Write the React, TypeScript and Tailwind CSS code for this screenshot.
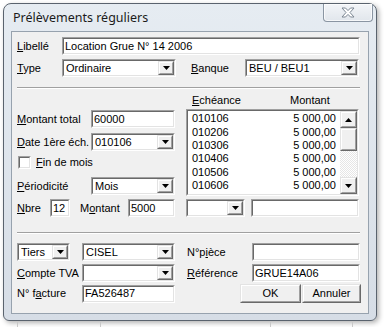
import React from "react";

type P = { className?: string; children?: React.ReactNode; inner?: string };

function Raised({ className = "", children }: P) {
  return (
    <div className={`border border-t-[#e3e3e3] border-l-[#e3e3e3] border-r-[#696969] border-b-[#696969] bg-[#f0f0f0] ${className}`}>
      <div className="w-full h-full border border-t-white border-l-white border-r-[#a0a0a0] border-b-[#a0a0a0] flex items-center justify-center">
        {children}
      </div>
    </div>
  );
}

function Sunken({ className = "", children, inner = "" }: P) {
  return (
    <div className={`border border-t-[#a0a0a0] border-l-[#a0a0a0] border-r-white border-b-white shrink-0 ${className}`}>
      <div className={`w-full h-full bg-white border border-t-[#696969] border-l-[#696969] border-r-[#e3e3e3] border-b-[#e3e3e3] ${inner}`}>
        {children}
      </div>
    </div>
  );
}

const Tri = ({ up }: { up?: boolean }) => (
  <svg width="7" height="4" viewBox="0 0 7 4">
    <polygon points={up ? "0,4 7,4 3.5,0" : "0,0 7,0 3.5,4"} fill="#000" />
  </svg>
);

function Input({ className = "", text = "" }: { className?: string; text?: string }) {
  return (
    <Sunken className={`h-[18px] ${className}`} inner="flex items-center pl-[1px] text-[11px] leading-none">
      {text}
    </Sunken>
  );
}

function Combo({ className = "", text = "" }: { className?: string; text?: string }) {
  return (
    <Sunken className={`h-[18px] ${className}`} inner="flex items-stretch text-[11px] leading-none">
      <div className="flex-1 flex items-center pl-[2px]">{text}</div>
      <Raised className="w-[16px]">
        <Tri />
      </Raised>
    </Sunken>
  );
}

function Sep() {
  return <div className="h-[2px] w-[343px] border-t border-t-[#a0a0a0] border-b border-b-white" />;
}

const rows = ["010106", "010206", "010306", "010406", "010506", "010606"];

export default function App() {
  return (
    <div className="w-[385px] h-[327px] bg-white overflow-hidden font-['Liberation_Sans',Arial,sans-serif] text-black">
      <div className="ml-[3px] mt-[3px] w-[374px] h-[318px] rounded-t-[8px] rounded-b-[6px] border border-[#5a636e] bg-gradient-to-b from-[#e6ecf2] to-[#d6dde6] shadow-[2px_2px_5px_rgba(0,0,0,0.3)] flex flex-col">
        {/* title bar */}
        <div className="h-[27px] flex items-start justify-between">
          <div className="pl-[9px] pt-[6px] text-[12.5px] leading-[16px] text-[#1b1b1b] font-['Noto_Sans','Open_Sans',sans-serif]">
            Prélèvements réguliers
          </div>
          <div className="mr-[3px] w-[50px] h-[18px] rounded-b-[4px] border border-t-0 border-[#8a95a2] bg-gradient-to-b from-[#f3f5f8] to-[#e1e6ec] flex items-center justify-center shadow-[inset_0_0_0_1px_rgba(255,255,255,0.7)]">
            <svg width="14" height="11" viewBox="0 0 14 11">
              <polygon
                points="1,1 4.5,1 7,3.6 9.5,1 13,1 9,5.5 13,10 9.5,10 7,7.4 4.5,10 1,10 5,5.5"
                fill="#ffffff"
                stroke="#7c8793"
                strokeWidth="1"
                strokeLinejoin="round"
              />
            </svg>
          </div>
        </div>
        {/* client */}
        <div className="mx-[7px] h-[283px] border border-[#97a2ae] bg-[#f0f0f0]">
          <div className="pt-[5px] pl-[5px] flex flex-col text-[11px] leading-none">
            {/* Libellé */}
            <div className="flex items-center h-[18px]">
              <div className="w-[45px]">
                <span className="underline">L</span>ibellé
              </div>
              <Input className="w-[298px]" text="Location Grue N° 14 2006" />
            </div>
            {/* Type / Banque */}
            <div className="flex items-center h-[18px] mt-[4px]">
              <div className="w-[45px]">
                <span className="underline">T</span>ype
              </div>
              <Combo className="w-[114px]" text="Ordinaire" />
              <div className="ml-[15px] w-[54px]">
                <span className="underline">B</span>anque
              </div>
              <Combo className="w-[114px]" text="BEU / BEU1" />
            </div>
            <div className="mt-[10px]">
              <Sep />
            </div>
            {/* middle */}
            <div className="flex">
              <div className="w-[158px] pt-[21px] flex flex-col">
                <div className="flex items-center h-[18px]">
                  <div className="w-[74px]">
                    <span className="underline">M</span>ontant total
                  </div>
                  <Input className="w-[84px]" text="60000" />
                </div>
                <div className="flex items-center h-[18px] mt-[5px]">
                  <div className="w-[74px]">
                    <span className="underline">D</span>ate 1ère éch.
                  </div>
                  <Combo className="w-[84px]" text="010106" />
                </div>
                <div className="flex items-center h-[13px] mt-[5px]">
                  <Sunken className="w-[13px] h-[13px] ml-[1px]" />
                  <div className="ml-[5px]">
                    <span className="underline">F</span>in de mois
                  </div>
                </div>
                <div className="flex items-center h-[18px] mt-[8px]">
                  <div className="w-[74px]">
                    <span className="underline">P</span>ériodicité
                  </div>
                  <Combo className="w-[84px]" text="Mois" />
                </div>
                <div className="flex items-center h-[18px] mt-[4px]">
                  <div className="w-[33px]">
                    <span className="underline">N</span>bre
                  </div>
                  <Input className="w-[20px]" text="12" />
                  <div className="ml-[10px] w-[48px]">
                    M<span className="underline">o</span>ntant
                  </div>
                  <Input className="w-[47px]" text="5000" />
                </div>
              </div>
              <div className="ml-[11px] w-[173px] flex flex-col">
                <div className="h-[20px] flex items-end pb-[3px]">
                  <div className="ml-[6px] w-[98px]">
                    <span className="underline">E</span>chéance
                  </div>
                  <div>Montant</div>
                </div>
                <Sunken className="w-[173px] h-[87px]" inner="flex">
                  <div className="flex-1 flex flex-col pt-[1px]">
                    {rows.map((r) => (
                      <div key={r} className="h-[13.4px] flex items-center justify-between pl-[4px] pr-[4px]">
                        <span>{r}</span>
                        <span>5 000,00</span>
                      </div>
                    ))}
                  </div>
                  <div className="w-[17px] flex flex-col">
                    <Raised className="h-[17px]">
                      <Tri up />
                    </Raised>
                    <Raised className="h-[23px]" />
                    <div className="flex-1 bg-[repeating-conic-gradient(#e6e6e6_0%_25%,#ffffff_0%_50%)] bg-[length:2px_2px]" />
                    <Raised className="h-[17px]">
                      <Tri />
                    </Raised>
                  </div>
                </Sunken>
                <div className="flex items-center h-[18px] mt-[3px]">
                  <Combo className="w-[59px]" />
                  <Input className="w-[108px] ml-[6px]" />
                </div>
              </div>
            </div>
            <div className="mt-[15px]">
              <Sep />
            </div>
            {/* bottom */}
            <div className="flex items-center h-[18px] mt-[9px]">
              <Combo className="w-[53px]" text="Tiers" />
              <Combo className="w-[93px] ml-[12px]" text="CISEL" />
              <div className="ml-[12px] w-[65px]">
                N°p<span className="underline">i</span>èce
              </div>
              <Input className="w-[108px]" />
            </div>
            <div className="flex items-center h-[18px] mt-[3px]">
              <div className="w-[65px]">
                <span className="underline">C</span>ompte TVA
              </div>
              <Combo className="w-[93px]" />
              <div className="ml-[12px] w-[65px]">
                <span className="underline">R</span>éférence
              </div>
              <Input className="w-[108px]" text="GRUE14A06" />
            </div>
            <div className="flex items-center h-[19px] mt-[2px]">
              <div className="w-[65px]">
                N° f<span className="underline">a</span>cture
              </div>
              <Input className="w-[93px]" text="FA526487" />
              <Raised className="ml-[65px] w-[61px] h-[19px]">OK</Raised>
              <Raised className="ml-[1px] w-[59px] h-[19px]">Annuler</Raised>
            </div>
          </div>
        </div>
      </div>
      {/* background strip below window */}
      <div className="h-[6px] flex">
        <div className="ml-[17px] w-px h-full bg-[#c9c9c9]" />
        <div className="ml-[82px] w-px h-full bg-[#c9c9c9]" />
        <div className="ml-[169px] w-px h-full bg-[#c9c9c9]" />
        <div className="ml-[81px] w-px h-full bg-[#c9c9c9]" />
      </div>
    </div>
  );
}
